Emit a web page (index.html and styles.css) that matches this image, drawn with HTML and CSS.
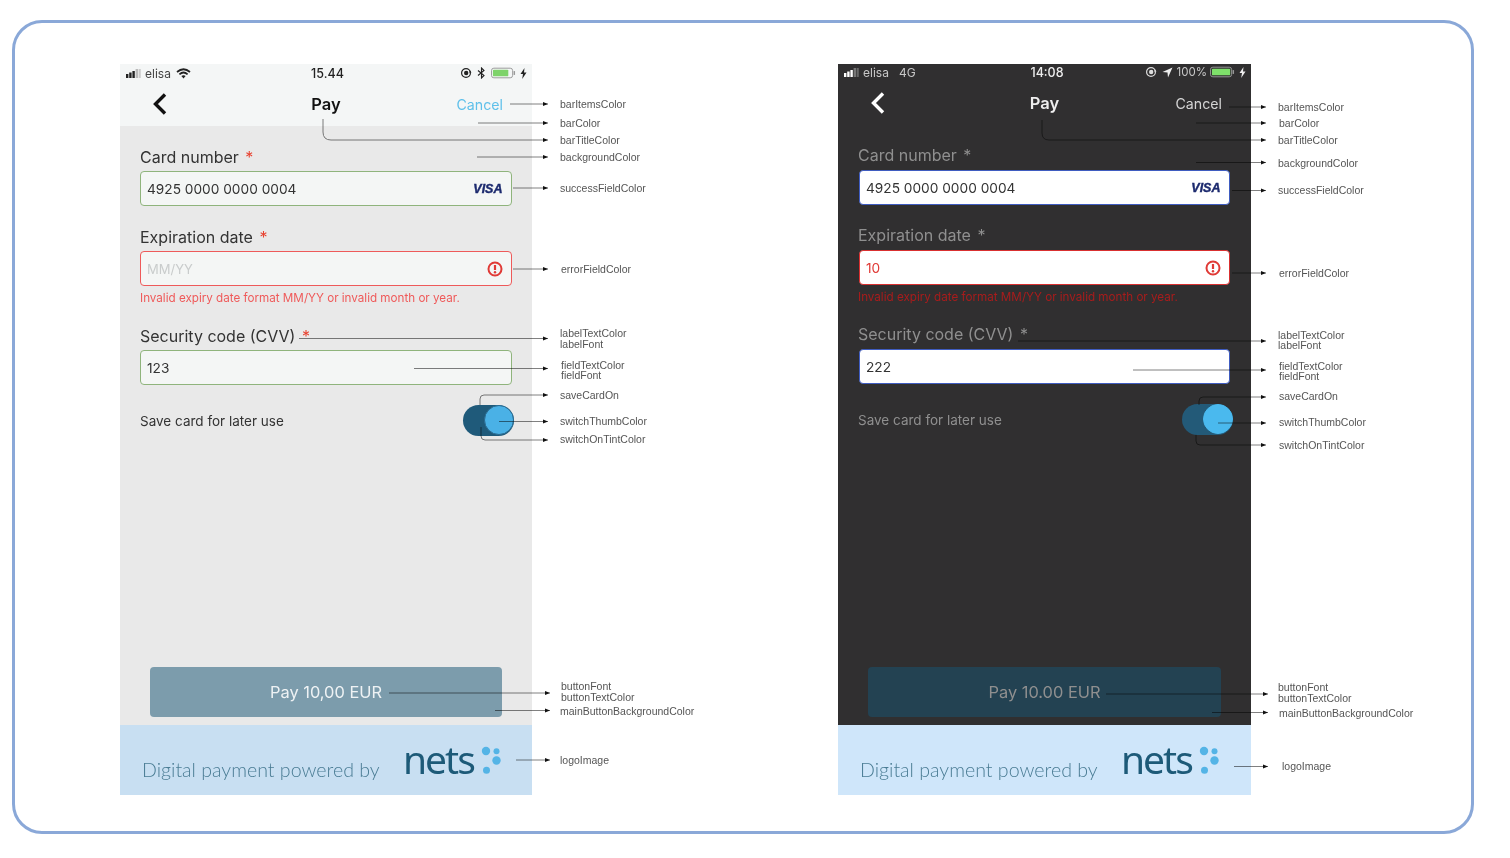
FILE: index.html
```html
<!DOCTYPE html>
<html lang="en">
<head>
    <meta charset="UTF-8">
    <title>Payment screen theming</title>
    <link rel="stylesheet" href="styles.css">
</head>
<body>
<div class="frame">

    <!-- light theme -->
    <div class="figure">
        <div class="phone">
            <div class="status-bar">
                <div class="status-left">
                    <svg class="signal" width="15" height="9" viewBox="0 0 15 9"><rect x="0" y="5" width="2.4" height="4" fill="#222"/><rect x="3.2" y="3.5" width="2.4" height="5.5" fill="#222"/><rect x="6.4" y="2" width="2.4" height="7" fill="#222"/><rect x="9.6" y="0" width="2.4" height="9" fill="#bbb"/><rect x="12.6" y="0" width="2.2" height="9" fill="#ccc"/></svg>
                    <span>elisa</span>
                    <svg class="wifi" width="15" height="11" viewBox="0 0 15 11"><path d="M1 4 Q7.5 -1.5 14 4 M3.4 6.4 Q7.5 2.6 11.6 6.4" fill="none" stroke="#222" stroke-width="1.7"/><path d="M5.4 8 Q7.5 6.3 9.6 8 L7.5 10.5 Z" fill="#222"/></svg>
                </div>
                <div class="status-time">15.44</div>
                <div class="status-right">
                    <svg width="12" height="12" viewBox="0 0 12 12"><circle cx="6" cy="6" r="4.4" fill="none" stroke="#222" stroke-width="1.2"/><circle cx="6.2" cy="6" r="2.2" fill="#222"/><path d="M10 3.5 L11.5 5.5 L9 5.5 Z" fill="#222"/></svg>
                    <svg width="9" height="12" viewBox="0 0 9 12"><path d="M1 3.5 L7 8.5 L4.5 11 V1 L7 3.5 L1 8.5" fill="none" stroke="#222" stroke-width="1.1"/></svg>
                    <svg width="25" height="12" viewBox="0 0 26 12"><rect x="0.5" y="1" width="22" height="10" rx="2.5" fill="none" stroke="#999"/><rect x="2" y="2.5" width="16" height="7" rx="1" fill="#7ed36a"/><rect x="23.5" y="4" width="1.5" height="4" fill="#999"/></svg>
                    <svg class="bolt" width="7" height="11" viewBox="0 0 7 11"><path d="M4.5 0 L0.5 6 H3 L2.2 11 L6.5 4.5 H4 Z" fill="#222"/></svg>
                </div>
            </div>
            <div class="nav-bar">
                <svg class="back" width="16" height="24" viewBox="0 0 16 24"><path d="M13 2.5 L3.5 12 L13 21.5" fill="none" stroke="#111" stroke-width="3.4"/></svg>
                <div class="nav-title">Pay</div>
                <div class="nav-cancel">Cancel</div>
            </div>
            <div class="content">
                <div class="label">Card number <span class="req">*</span></div>
                <div class="field field-ok">
                    <span>4925 0000 0000 0004</span>
                    <span class="visa">VISA</span>
                </div>
                <div class="label label-gap">Expiration date <span class="req">*</span></div>
                <div class="field field-error">
                    <span class="placeholder">MM/YY</span>
                    <svg width="16" height="16" viewBox="0 0 16 16"><circle cx="8" cy="8" r="6.5" fill="none" stroke="#e03a36" stroke-width="2"/><path d="M8 4 V9" stroke="#e03a36" stroke-width="2.2"/><circle cx="8" cy="11.3" r="1.2" fill="#e03a36"/></svg>
                </div>
                <div class="error-text">Invalid expiry date format MM/YY or invalid month or year.</div>
                <div class="label label-gap-small">Security code (CVV) <span class="req">*</span></div>
                <div class="field field-ok"><span>123</span></div>
                <div class="save-row">
                    <span>Save card for later use</span>
                    <div class="switch"><div class="thumb"></div></div>
                </div>
                <div class="pay-button">Pay 10,00 EUR</div>
            </div>
            <div class="footer">
                <span class="powered">Digital payment powered by</span>
                <span class="nets">nets</span>
                <svg class="dots" width="20" height="30" viewBox="0 0 20 30"><circle cx="5" cy="5" r="4.2" fill="#54b4e6"/><circle cx="15.5" cy="5.3" r="3" fill="#54b4e6"/><circle cx="15.5" cy="14.5" r="4.2" fill="#54b4e6"/><circle cx="5.5" cy="24.3" r="3.5" fill="#54b4e6"/></svg>
            </div>
        </div>

        <svg class="notes" width="600" height="731" viewBox="0 0 600 731">
            <defs><marker id="arrow-a" markerUnits="userSpaceOnUse" markerWidth="6" markerHeight="6" refX="5" refY="3" orient="auto"><path d="M0 1 L5 3 L0 5 Z" fill="#111"/></marker></defs>
            <g class="lines">
                <path d="M390 40H428" marker-end="url(#arrow-a)"/>
                <path d="M358 59H428" marker-end="url(#arrow-a)"/>
                <path d="M203 55V68Q203 76 211 76H428" marker-end="url(#arrow-a)"/>
                <path d="M357 93H428" marker-end="url(#arrow-a)"/>
                <path d="M393 124H428" marker-end="url(#arrow-a)"/>
                <path d="M393 205H428" marker-end="url(#arrow-a)"/>
                <path d="M179 274.5H428" marker-end="url(#arrow-a)"/>
                <path d="M294 304.5H428" marker-end="url(#arrow-a)"/>
                <path d="M360 341V335Q360 331 364 331H428" marker-end="url(#arrow-a)"/>
                <path d="M379 357.5H428" marker-end="url(#arrow-a)"/>
                <path d="M361 363V372Q361 376 365 376H428" marker-end="url(#arrow-a)"/>
                <path d="M269 629H430" marker-end="url(#arrow-a)"/>
                <path d="M375 646.5H430" marker-end="url(#arrow-a)"/>
                <path d="M396 696H430" marker-end="url(#arrow-a)"/>
            </g>
            <g class="note-text">
                <text x="440" y="40">barItemsColor</text>
                <text x="440" y="59">barColor</text>
                <text x="440" y="76">barTitleColor</text>
                <text x="440" y="93">backgroundColor</text>
                <text x="440" y="124">successFieldColor</text>
                <text x="441" y="205">errorFieldColor</text>
                <text x="440" y="269">labelTextColor</text>
                <text x="440" y="280">labelFont</text>
                <text x="441" y="300.5">fieldTextColor</text>
                <text x="441" y="311">fieldFont</text>
                <text x="440" y="331">saveCardOn</text>
                <text x="440" y="357">switchThumbColor</text>
                <text x="440" y="375">switchOnTintColor</text>
                <text x="441" y="622">buttonFont</text>
                <text x="441" y="633">buttonTextColor</text>
                <text x="440" y="647">mainButtonBackgroundColor</text>
                <text x="440" y="696">logoImage</text>
            </g>
        </svg>
    </div>

    <!-- dark theme -->
    <div class="figure">
        <div class="phone phone-dark">
            <div class="status-bar">
                <div class="status-left">
                    <svg class="signal" width="15" height="9" viewBox="0 0 15 9"><rect x="0" y="5" width="2.4" height="4" fill="#fff"/><rect x="3.2" y="3.5" width="2.4" height="5.5" fill="#fff"/><rect x="6.4" y="2" width="2.4" height="7" fill="#fff"/><rect x="9.6" y="0" width="2.4" height="9" fill="#777"/><rect x="12.6" y="0" width="2.2" height="9" fill="#666"/></svg>
                    <span>elisa</span>
                    <span class="carrier">4G</span>
                </div>
                <div class="status-time">14:08</div>
                <div class="status-right">
                    <svg width="12" height="12" viewBox="0 0 12 12"><circle cx="6" cy="6" r="4.4" fill="none" stroke="#ddd" stroke-width="1.2"/><circle cx="6.2" cy="6" r="2.2" fill="#ddd"/><path d="M10 3.5 L11.5 5.5 L9 5.5 Z" fill="#ddd"/></svg>
                    <svg width="11" height="11" viewBox="0 0 11 11"><path d="M10.5 0.5 L0.5 5 L5.5 5.5 L6 10.5 Z" fill="#eee"/></svg>
                    <span class="percent">100%</span>
                    <svg width="25" height="12" viewBox="0 0 26 12"><rect x="0.5" y="1" width="22" height="10" rx="2.5" fill="none" stroke="#999"/><rect x="2" y="2.5" width="19" height="7" rx="1" fill="#7ee06a"/><rect x="23.5" y="4" width="1.5" height="4" fill="#999"/></svg>
                    <svg class="bolt" width="7" height="11" viewBox="0 0 7 11"><path d="M4.5 0 L0.5 6 H3 L2.2 11 L6.5 4.5 H4 Z" fill="#eee"/></svg>
                </div>
            </div>
            <div class="nav-bar">
                <svg class="back" width="16" height="24" viewBox="0 0 16 24"><path d="M13 2.5 L3.5 12 L13 21.5" fill="none" stroke="#fff" stroke-width="3.4"/></svg>
                <div class="nav-title">Pay</div>
                <div class="nav-cancel">Cancel</div>
            </div>
            <div class="content">
                <div class="label">Card number <span class="req">*</span></div>
                <div class="field field-ok">
                    <span>4925 0000 0000 0004</span>
                    <span class="visa">VISA</span>
                </div>
                <div class="label label-gap">Expiration date <span class="req">*</span></div>
                <div class="field field-error">
                    <span class="error-value">10</span>
                    <svg width="16" height="16" viewBox="0 0 16 16"><circle cx="8" cy="8" r="6.5" fill="none" stroke="#e03a36" stroke-width="2"/><path d="M8 4 V9" stroke="#e03a36" stroke-width="2.2"/><circle cx="8" cy="11.3" r="1.2" fill="#e03a36"/></svg>
                </div>
                <div class="error-text">Invalid expiry date format MM/YY or invalid month or year.</div>
                <div class="label label-gap-small">Security code (CVV) <span class="req">*</span></div>
                <div class="field field-ok"><span>222</span></div>
                <div class="save-row">
                    <span>Save card for later use</span>
                    <div class="switch"><div class="thumb"></div></div>
                </div>
                <div class="pay-button">Pay 10.00 EUR</div>
            </div>
            <div class="footer">
                <span class="powered">Digital payment powered by</span>
                <span class="nets">nets</span>
                <svg class="dots" width="20" height="30" viewBox="0 0 20 30"><circle cx="5" cy="5" r="4.2" fill="#54b4e6"/><circle cx="15.5" cy="5.3" r="3" fill="#54b4e6"/><circle cx="15.5" cy="14.5" r="4.2" fill="#54b4e6"/><circle cx="5.5" cy="24.3" r="3.5" fill="#54b4e6"/></svg>
            </div>
        </div>

        <svg class="notes" width="600" height="731" viewBox="0 0 600 731">
            <defs><marker id="arrow-b" markerUnits="userSpaceOnUse" markerWidth="6" markerHeight="6" refX="5" refY="3" orient="auto"><path d="M0 1 L5 3 L0 5 Z" fill="#111"/></marker></defs>
            <g class="lines">
                <path d="M391 43H428" marker-end="url(#arrow-b)"/>
                <path d="M358 59H428" marker-end="url(#arrow-b)"/>
                <path d="M204 56V69Q204 76 211 76H428" marker-end="url(#arrow-b)"/>
                <path d="M358 98.5H428" marker-end="url(#arrow-b)"/>
                <path d="M394 126.5H428" marker-end="url(#arrow-b)"/>
                <path d="M394 209H428" marker-end="url(#arrow-b)"/>
                <path d="M180 277H428" marker-end="url(#arrow-b)"/>
                <path d="M295 306H428" marker-end="url(#arrow-b)"/>
                <path d="M361 341V337Q361 333 365 333H428" marker-end="url(#arrow-b)"/>
                <path d="M380 359H428" marker-end="url(#arrow-b)"/>
                <path d="M358 371V377Q358 381 362 381H428" marker-end="url(#arrow-b)"/>
                <path d="M268 630H430" marker-end="url(#arrow-b)"/>
                <path d="M374 648.5H430" marker-end="url(#arrow-b)"/>
                <path d="M396 702.5H430" marker-end="url(#arrow-b)"/>
            </g>
            <g class="note-text">
                <text x="440" y="43">barItemsColor</text>
                <text x="441" y="59">barColor</text>
                <text x="440" y="76">barTitleColor</text>
                <text x="440" y="99">backgroundColor</text>
                <text x="440" y="126">successFieldColor</text>
                <text x="441" y="209">errorFieldColor</text>
                <text x="440" y="271">labelTextColor</text>
                <text x="440" y="281">labelFont</text>
                <text x="441" y="301.5">fieldTextColor</text>
                <text x="441" y="312">fieldFont</text>
                <text x="441" y="332">saveCardOn</text>
                <text x="441" y="358">switchThumbColor</text>
                <text x="441" y="381">switchOnTintColor</text>
                <text x="440" y="623">buttonFont</text>
                <text x="440" y="634">buttonTextColor</text>
                <text x="441" y="649">mainButtonBackgroundColor</text>
                <text x="444" y="702">logoImage</text>
            </g>
        </svg>
    </div>

</div>
</body>
</html>
```

FILE: styles.css
```css
html, body {
    margin: 0;
    background-color: #fff;
}

body {
    font-family: Inter, "Liberation Sans", sans-serif;
    height: 858px;
    overflow: hidden;
}

/* the source is a scaled-down picture, so everything is a little soft */
.frame {
    display: grid;
    grid-template-columns: 718px 413px;
    box-sizing: border-box;
    width: 1462px;
    height: 814px;
    margin: 20px 0 0 12px;
    padding: 41px 0 0 105px;
    border: 3px solid #8aa8d8;
    border-radius: 30px;
    filter: blur(0.4px);
}

.figure {
    position: relative;
    height: 731px;
}

.phone {
    display: flex;
    flex-direction: column;
    width: 412px;
    height: 731px;
    background-color: #e9e9e9;
    color: #333;
}

.status-bar {
    display: grid;
    grid-template-columns: 1fr auto 1fr;
    align-items: center;
    height: 18px;
    padding: 0 5px 0 6px;
    background-color: #f4f6f6;
    font-size: 12px;
    color: #444;
}

.status-left,
.status-right {
    display: flex;
    align-items: center;
    gap: 4px;
}

.status-right {
    justify-content: flex-end;
    gap: 5px;
}

.wifi {
    margin-left: 1px;
}

.bolt {
    margin-left: -1px;
}

.status-time {
    margin-left: 2px;
    font-size: 12.5px;
    font-weight: 500;
    color: #222;
}

.carrier {
    margin-left: 6px;
}

.nav-bar {
    display: grid;
    grid-template-columns: 1fr auto 1fr;
    align-items: center;
    height: 44px;
    padding: 0 29px;
    background-color: #f4f6f6;
}

.back {
    margin-left: 3px;
}

.nav-title {
    font-size: 16.5px;
    font-weight: 600;
    color: #111;
}

.nav-cancel {
    justify-self: end;
    font-size: 14.2px;
    color: #5fc0ea;
}

.content {
    display: flex;
    flex-direction: column;
    flex: 1;
    padding: 19px 20px 8px;
}

.label {
    height: 24px;
    line-height: 24px;
    margin-bottom: 2px;
    font-size: 16px;
}

.label-gap {
    margin-top: 19px;
}

.label-gap-small {
    margin-top: 18px;
}

.req {
    margin-left: 2px;
    color: #e8412f;
}

.field {
    display: flex;
    align-items: center;
    justify-content: space-between;
    box-sizing: border-box;
    height: 35px;
    padding: 0 8.5px 0 6px;
    border: 1.5px solid;
    border-radius: 4px;
    background-color: #f4f6f5;
    font-size: 13.7px;
    color: #333;
}

.field-ok {
    border-color: #8fb47c;
}

.field-error {
    border-color: #ee5a5a;
}

.placeholder {
    font-size: 13px;
    color: #c9cccc;
}

.visa {
    font-family: "Liberation Sans", sans-serif;
    font-size: 12.5px;
    font-weight: 700;
    font-style: italic;
    color: #1c2a6e;
    -webkit-text-stroke: 0.4px #1c2a6e;
}

.error-text {
    height: 16px;
    line-height: 16px;
    margin-top: 4px;
    font-size: 11.65px;
    color: #ef5a5a;
}

.save-row {
    display: flex;
    align-items: center;
    justify-content: space-between;
    height: 31px;
    margin-top: 20px;
    font-size: 13.5px;
}

.switch {
    display: flex;
    justify-content: flex-end;
    box-sizing: border-box;
    width: 51px;
    height: 31px;
    margin-right: -2px;
    border-radius: 16px;
    background-color: #1f5a7a;
}

.thumb {
    box-sizing: border-box;
    width: 30px;
    height: 30px;
    border: 1px solid #2a6a90;
    border-radius: 50%;
    background-color: #4ab1e6;
}

.pay-button {
    display: flex;
    align-items: center;
    justify-content: center;
    height: 50px;
    margin: auto 10px 0;
    border-radius: 4px;
    background-color: #7c9cac;
    font-size: 16.4px;
    color: #eef2f4;
}

.footer {
    display: flex;
    align-items: flex-end;
    box-sizing: border-box;
    height: 70px;
    padding: 0 0 13px 22px;
    background-color: #c8dff2;
}

.powered {
    width: 261px;
    line-height: 24px;
    font-family: Lato, sans-serif;
    font-size: 19.6px;
    font-weight: 300;
    color: #4a7c94;
}

.nets {
    margin-bottom: 3px;
    line-height: 40px;
    font-family: "Noto Sans", sans-serif;
    font-size: 39px;
    letter-spacing: -2px;
    color: #1d5a78;
}

.dots {
    margin: 0 0 6px 7px;
}

/* dark theme overrides */
.phone-dark {
    width: 413px;
    background-color: #302f30;
    color: #8f8f8f;
}

.phone-dark .status-bar {
    height: 16px;
    background-color: #302f30;
    color: #c8c8c8;
}

.phone-dark .status-time {
    margin-left: 4px;
    color: #eee;
}

.phone-dark .percent {
    margin: 0 -2px 0 -1px;
    font-size: 11.5px;
    color: #c8c8c8;
}

.phone-dark .nav-bar {
    height: 46px;
    background-color: #302f30;
}

.phone-dark .nav-title {
    color: #eee;
}

.phone-dark .nav-cancel {
    color: #d4d4d4;
}

.phone-dark .content {
    padding: 18px 21px 8px 20px;
}

.phone-dark .label {
    line-height: 23px;
}

.phone-dark .req {
    color: #8f8f8f;
}

.phone-dark .field {
    margin-left: 1px;
    background-color: #fff;
}

.phone-dark .field-ok {
    border-color: #3f5cc0;
}

.phone-dark .field-error {
    border-color: #d93030;
}

.error-value {
    color: #e03a36;
}

.phone-dark .error-text {
    color: #a81c1c;
}

.phone-dark .switch {
    margin-right: -3px;
    background-color: #235a78;
}

.phone-dark .thumb {
    border-color: #4ab9ee;
    background-color: #4ab9ee;
}

.phone-dark .pay-button {
    margin: auto 9px 0 10px;
    background-color: #234252;
    color: #8f8f8f;
}

.phone-dark .footer {
    background-color: #cfe6fa;
}

/* leader lines and their names, drawn over the phone */
.notes {
    position: absolute;
    top: 0;
    left: 0;
    overflow: visible;
    mix-blend-mode: multiply;
}

.lines path {
    fill: none;
    stroke: #808080;
    stroke-width: 1;
}

.note-text text {
    font-family: "Liberation Sans", sans-serif;
    font-size: 10.5px;
    fill: #555;
    dominant-baseline: central;
}
```
